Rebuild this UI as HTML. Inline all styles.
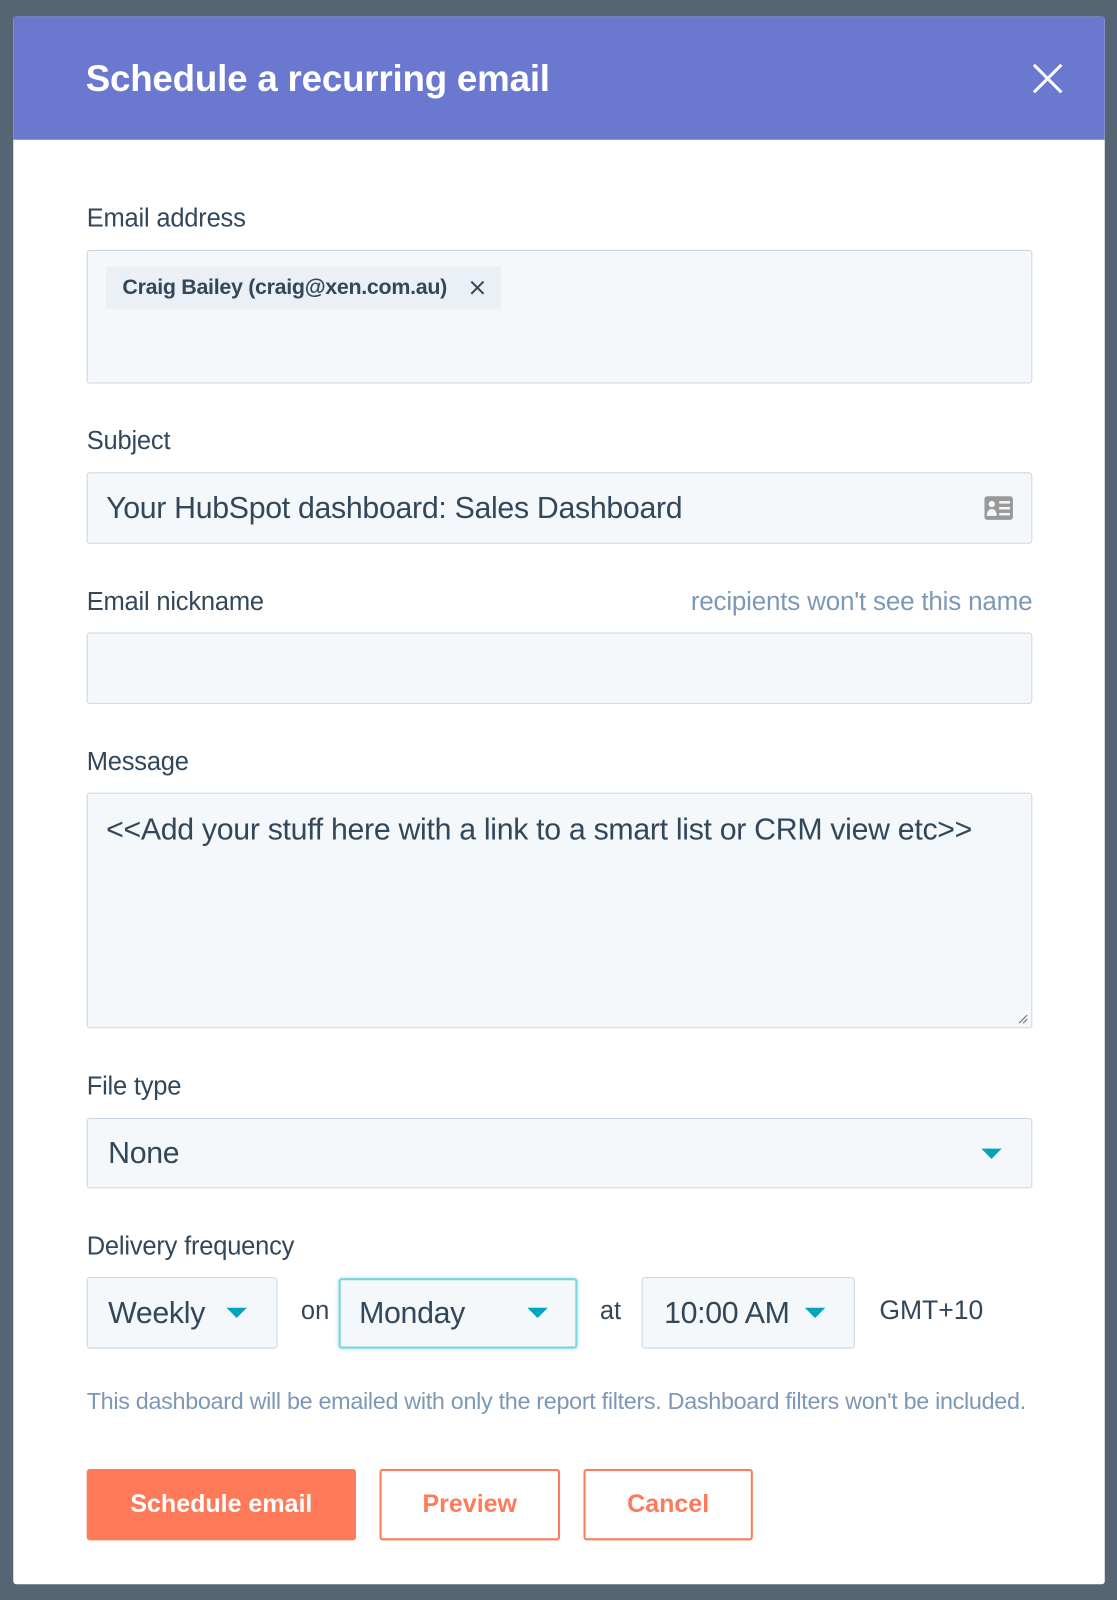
<!DOCTYPE html>
<html><head><meta charset="utf-8"><style>
*{box-sizing:border-box;margin:0;padding:0}
body{width:1117px;height:1600px;background:#566573;font-family:"Liberation Sans",sans-serif;position:relative;overflow:hidden;color:#33475b}
#w{position:absolute;left:0;top:0;width:1095px;height:1568px;transform:scale(1.0201);transform-origin:0 0}
.a{position:absolute}
.t{position:absolute;white-space:nowrap;height:40px;line-height:40px}
.lbl{font-size:25px;color:#33475b;letter-spacing:-0.2px}
.inp{position:absolute;background:#f5f8fa;border:1px solid #cbd6e2;border-radius:3px}
.txt{font-size:29.7px;color:#33475b;letter-spacing:-0.3px}
.tri{position:absolute;width:0;height:0;border-left:10px solid transparent;border-right:10px solid transparent;border-top:10px solid #00a4bd}
.btn{position:absolute;border-radius:3px;font-size:24.5px;font-weight:bold;text-align:center;line-height:70px;height:70px;top:1440px}
</style></head><body><div id="w">
<div class="a" style="left:13px;top:16px;width:1070px;height:1537px;background:#fff;border-radius:3px;overflow:hidden">
<div class="a" style="left:0;top:0;width:1070px;height:121px;background:#6b78d0"></div>
</div>
<div class="t" style="left:84px;top:57px;font-size:36px;font-weight:bold;color:#fff;letter-spacing:-0.2px">Schedule a recurring email</div>
<svg class="a" style="left:1012px;top:62px" width="30" height="30" viewBox="0 0 30 30"><path d="M1.5 1.5L28.5 28.5M28.5 1.5L1.5 28.5" stroke="#fff" stroke-width="3"/></svg>

<div class="t lbl" style="left:85px;top:194px">Email address</div>
<div class="inp" style="left:85px;top:245px;width:927px;height:131px"></div>
<div class="a" style="left:104px;top:261px;width:387px;height:42px;background:#eaf0f6;border-radius:2px"></div>
<div class="t" style="left:120px;top:262px;font-size:21px;font-weight:bold;color:#33475b;letter-spacing:-0.3px">Craig Bailey (craig@xen.com.au)</div>
<svg class="a" style="left:461px;top:275px" width="14" height="14" viewBox="0 0 14 14"><path d="M1 1L13 13M13 1L1 13" stroke="#33475b" stroke-width="2"/></svg>

<div class="t lbl" style="left:85px;top:412px">Subject</div>
<div class="inp" style="left:85px;top:463px;width:927px;height:70px"></div>
<div class="t txt" style="left:104px;top:479px">Your HubSpot dashboard: Sales Dashboard</div>
<svg class="a" style="left:965px;top:486px" width="28" height="24" viewBox="0 0 29 24"><rect x="0" y="0" width="29" height="24" rx="3" fill="#999"/><circle cx="7.5" cy="8" r="3.2" fill="#f5f8fa"/><path d="M2.5 20c0-5 2.5-7 5-7s5 2 5 7z" fill="#f5f8fa"/><rect x="15" y="5" width="11" height="2.5" fill="#f5f8fa"/><rect x="15" y="11" width="11" height="2.5" fill="#f5f8fa"/><rect x="15" y="17" width="11" height="2.5" fill="#f5f8fa"/></svg>

<div class="t lbl" style="left:85px;top:570px">Email nickname</div>
<div class="t" style="right:83px;top:570px;font-size:25.5px;color:#7c98b6;letter-spacing:-0.2px">recipients won't see this name</div>
<div class="inp" style="left:85px;top:620px;width:927px;height:70px"></div>

<div class="t lbl" style="left:85px;top:727px">Message</div>
<div class="inp" style="left:85px;top:777px;width:927px;height:231px"></div>
<div class="t txt" style="left:104px;top:794px">&lt;&lt;Add your stuff here with a link to a smart list or CRM view etc&gt;&gt;</div>
<svg class="a" style="left:998px;top:994px" width="10" height="10" viewBox="0 0 10 10"><path d="M9 1L1 9M9 5L5 9" stroke="#666" stroke-width="1"/></svg>

<div class="t lbl" style="left:85px;top:1045px">File type</div>
<div class="inp" style="left:85px;top:1096px;width:927px;height:69px"></div>
<div class="t txt" style="left:106px;top:1111px">None</div>
<div class="tri" style="left:962px;top:1126px"></div>

<div class="t lbl" style="left:85px;top:1202px">Delivery frequency</div>
<div class="inp" style="left:85px;top:1252px;width:187px;height:70px"></div>
<div class="t txt" style="left:106px;top:1268px">Weekly</div>
<div class="tri" style="left:222px;top:1282px"></div>
<div class="t" style="left:295px;top:1265px;font-size:25px">on</div>
<div class="inp" style="left:332px;top:1253px;width:234px;height:69px;border:2px solid #7fd1de;box-shadow:0 0 4px #a6e3ec"></div>
<div class="t txt" style="left:352px;top:1268px">Monday</div>
<div class="tri" style="left:517px;top:1282px"></div>
<div class="t" style="left:588px;top:1265px;font-size:25px">at</div>
<div class="inp" style="left:629px;top:1252px;width:209px;height:70px"></div>
<div class="t txt" style="left:651px;top:1268px">10:00 AM</div>
<div class="tri" style="left:789px;top:1282px"></div>
<div class="t" style="left:862px;top:1264px;font-size:26px">GMT+10</div>

<div class="t" style="left:85px;top:1353px;font-size:22.9px;color:#7c98b6;letter-spacing:-0.3px">This dashboard will be emailed with only the report filters. Dashboard filters won't be included.</div>

<div class="btn" style="left:85px;width:264px;background:#ff7a59;color:#fff">Schedule email</div>
<div class="btn" style="left:372px;width:177px;border:2px solid #ff7a59;color:#ff7a59;line-height:66px">Preview</div>
<div class="btn" style="left:572px;width:166px;border:2px solid #ff7a59;color:#ff7a59;line-height:66px">Cancel</div>
</div></body></html>
